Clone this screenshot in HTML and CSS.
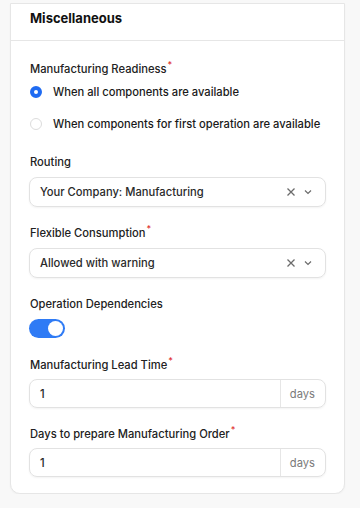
FILE: index.html
```html
<!DOCTYPE html>
<html lang="en">
<head>
    <meta charset="UTF-8">
    <meta name="viewport" content="width=device-width, initial-scale=1.0">
    <title>Miscellaneous</title>
    <link rel="stylesheet" href="styles.css">
</head>
<body>

<div class="card">
    <div class="card-header">Miscellaneous</div>
    <div class="card-body">

        <div class="field field-radio">
            <label class="label">Manufacturing Readiness<span class="req">*</span></label>
            <div class="radio-row">
                <span class="radio checked"></span>
                <span>When all components are available</span>
            </div>
            <div class="radio-row">
                <span class="radio"></span>
                <span>When components for first operation are available</span>
            </div>
        </div>

        <div class="field">
            <label class="label">Routing</label>
            <div class="select">
                <span class="select-value">Your Company: Manufacturing</span>
                <svg class="icon" width="12" height="12" viewBox="0 0 12 12"><path d="M2.5 2.5l7 7M9.5 2.5l-7 7" stroke="#6b6b6b" stroke-width="1.3" fill="none"/></svg>
                <svg class="icon" width="12" height="12" viewBox="0 0 12 12"><path d="M3 4.5l3 3 3-3" stroke="#6b6b6b" stroke-width="1.2" fill="none"/></svg>
            </div>
        </div>

        <div class="field">
            <label class="label">Flexible Consumption<span class="req">*</span></label>
            <div class="select">
                <span class="select-value">Allowed with warning</span>
                <svg class="icon" width="12" height="12" viewBox="0 0 12 12"><path d="M2.5 2.5l7 7M9.5 2.5l-7 7" stroke="#6b6b6b" stroke-width="1.3" fill="none"/></svg>
                <svg class="icon" width="12" height="12" viewBox="0 0 12 12"><path d="M3 4.5l3 3 3-3" stroke="#6b6b6b" stroke-width="1.2" fill="none"/></svg>
            </div>
        </div>

        <div class="field field-toggle">
            <label class="label">Operation Dependencies</label>
            <div class="toggle"><span class="knob"></span></div>
        </div>

        <div class="field field-input">
            <label class="label">Manufacturing Lead Time<span class="req">*</span></label>
            <div class="input-group">
                <span class="input-value">1</span>
                <span class="addon">days</span>
            </div>
        </div>

        <div class="field field-input">
            <label class="label">Days to prepare Manufacturing Order<span class="req">*</span></label>
            <div class="input-group">
                <span class="input-value">1</span>
                <span class="addon">days</span>
            </div>
        </div>

    </div>
</div>

</body>
</html>
```

FILE: styles.css
```css
body {
    margin: 0;
    font-family: Inter, "Noto Sans", sans-serif;
    background-color: #f8f8f8;
    color: #1f1f1f;
}

.card {
    margin: 3px 15px 0 10px;
    background-color: #fff;
    border: 1px solid #e6e6e6;
    border-radius: 0 0 10px 10px;
    box-shadow: 0px 1px 2px rgba(0, 0, 0, 0.04);
}

.card-header {
    height: 37px;
    padding: 6px 19px 0;
    box-sizing: border-box;
    font-size: 13px;
    font-weight: 700;
    line-height: 16px;
    color: #111;
    border-bottom: 1px solid #e6e6e6;
}

.card-body {
    padding: 21px 18px 16px 18px;
    display: flex;
    flex-direction: column;
    gap: 19px;
}

.field-radio {
    margin-bottom: 4px;
}

.field-toggle {
    margin-bottom: 1px;
}

.label {
    display: block;
    height: 14px;
    font-size: 11.2px;
    font-weight: 500;
    color: #222;
    margin: 0 0 8px 1px;
    line-height: 14px;
}

.field-input .label {
    margin-bottom: 7px;
}

.req {
    color: #e03131;
    font-size: 9px;
    line-height: 0;
    position: relative;
    top: -5px;
    margin-left: 1px;
}

.radio-row {
    display: flex;
    align-items: center;
    gap: 11px;
    height: 16px;
    font-size: 11.2px;
    font-weight: 500;
    color: #1a1a1a;
    margin-left: 1px;
    white-space: nowrap;
}

.radio-row + .radio-row {
    margin-top: 16px;
}

.radio {
    width: 12px;
    height: 12px;
    flex: none;
    border-radius: 50%;
    border: 1px solid #dcdcdc;
    box-sizing: border-box;
    background: #fff;
}

.radio.checked {
    border: 4px solid #1f6bf2;
}

.select, .input-group {
    height: 30px;
    border: 1px solid #e2e2e2;
    border-radius: 8px;
    box-sizing: border-box;
    display: flex;
    align-items: center;
    box-shadow: 0px 1px 2px rgba(0, 0, 0, 0.05);
    font-size: 11.2px;
    font-weight: 500;
    color: #2a2a2a;
}

.input-group {
    height: 29px;
}

.select {
    padding: 0 11px 0 10px;
    gap: 5px;
}

.select-value {
    flex: 1;
}

.toggle {
    width: 36px;
    height: 19px;
    border-radius: 10px;
    background-color: #2f7bf5;
    display: flex;
    align-items: center;
    justify-content: flex-end;
    padding: 0 2px;
    box-sizing: border-box;
}

.knob {
    width: 15px;
    height: 15px;
    border-radius: 50%;
    background: #fff;
}

.input-value {
    flex: 1;
    padding-left: 10px;
}

.addon {
    height: 100%;
    display: flex;
    align-items: center;
    padding: 0 10px 0 9px;
    border-left: 1px solid #e6e6e6;
    color: #7a7a7a;
    font-weight: 400;
}
```
